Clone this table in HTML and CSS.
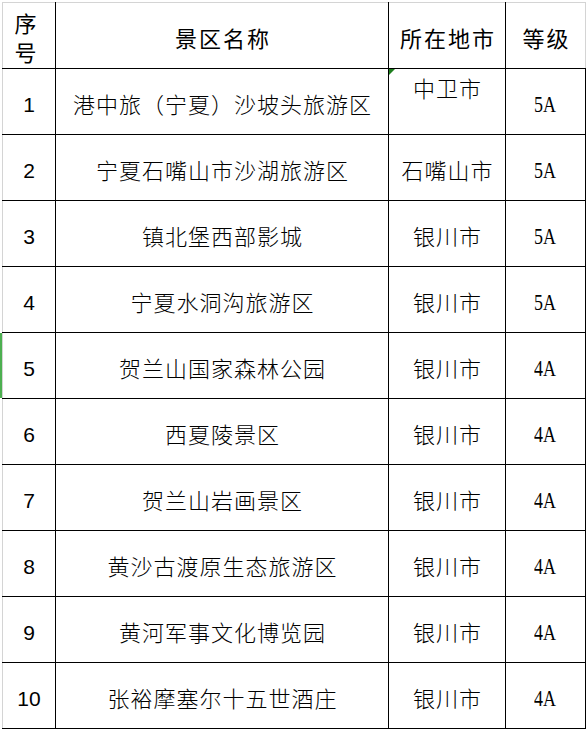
FILE: index.html
```html
<!DOCTYPE html>
<html lang="zh-CN">
<head>
<meta charset="utf-8">
<title>宁夏A级景区</title>
<link rel="stylesheet" href="styles.css">
</head>
<body>
<table class="sheet">
  <colgroup>
    <col class="c-no">
    <col class="c-name">
    <col class="c-city">
    <col class="c-grade">
  </colgroup>
  <thead>
    <tr>
      <th class="h-no">序<br>号</th>
      <th>景区名称</th>
      <th>所在地市</th>
      <th class="h-last">等级</th>
    </tr>
  </thead>
  <tbody>
    <tr><td class="no">1</td><td class="name">港中旅（宁夏）沙坡头旅游区</td><td class="city city-top flag">中卫市</td><td class="grade"><span class="g">5A</span></td></tr>
    <tr><td class="no">2</td><td class="name">宁夏石嘴山市沙湖旅游区</td><td class="city">石嘴山市</td><td class="grade"><span class="g">5A</span></td></tr>
    <tr><td class="no">3</td><td class="name">镇北堡西部影城</td><td class="city">银川市</td><td class="grade"><span class="g">5A</span></td></tr>
    <tr><td class="no">4</td><td class="name">宁夏水洞沟旅游区</td><td class="city">银川市</td><td class="grade"><span class="g">5A</span></td></tr>
    <tr><td class="no sel">5</td><td class="name">贺兰山国家森林公园</td><td class="city">银川市</td><td class="grade"><span class="g">4A</span></td></tr>
    <tr><td class="no">6</td><td class="name">西夏陵景区</td><td class="city">银川市</td><td class="grade"><span class="g">4A</span></td></tr>
    <tr><td class="no">7</td><td class="name">贺兰山岩画景区</td><td class="city">银川市</td><td class="grade"><span class="g">4A</span></td></tr>
    <tr><td class="no">8</td><td class="name">黄沙古渡原生态旅游区</td><td class="city">银川市</td><td class="grade"><span class="g">4A</span></td></tr>
    <tr><td class="no">9</td><td class="name">黄河军事文化博览园</td><td class="city">银川市</td><td class="grade"><span class="g">4A</span></td></tr>
    <tr><td class="no">10</td><td class="name">张裕摩塞尔十五世酒庄</td><td class="city">银川市</td><td class="grade"><span class="g">4A</span></td></tr>
  </tbody>
</table>
</body>
</html>
```
FILE: styles.css
```css
html, body {
  margin: 0;
  padding: 0;
  background: #ffffff;
}
body {
  padding: 2px 0 0 2px;
}
.sheet {
  border-collapse: collapse;
  table-layout: fixed;
  width: 583px;
  color: #000;
  font-family: "Noto Sans CJK SC", sans-serif;
}
.c-no { width: 53px; }
.c-name { width: 333px; }
.c-city { width: 117px; }
.c-grade { width: 80px; }

.sheet th,
.sheet td {
  box-sizing: border-box;
  height: 66px;
  padding: 6px 0 0 0;
  text-align: center;
  vertical-align: middle;
  border: 1px solid #000;
  white-space: nowrap;
  position: relative;
}
.sheet th {
  font-weight: 400;
  font-size: 22px;
  letter-spacing: 2px;
  text-indent: 2px;
  line-height: 30px;
  padding-top: 2px;
  border-top: 1px solid #d4d4d4;
}
.sheet th.h-no {
  line-height: 29px;
  padding-top: 3px;
  padding-right: 7px;
  letter-spacing: 0;
  text-indent: 0;
  border-left: 1px solid #d4d4d4;
}
.sheet th.h-last {
  border-right: 1px solid #d4d4d4;
}
.sheet td.no {
  font-family: "Liberation Sans", Arial, sans-serif;
  font-size: 21px;
  border-left: 1px solid #d4d4d4;
}
.sheet td.name,
.sheet td.city {
  font-size: 22px;
  font-weight: 300;
  letter-spacing: 1px;
  text-indent: 1px;
  line-height: 28px;
  padding-top: 3px;
}
.sheet td.city-top {
  vertical-align: top;
  padding-top: 4px;
}
.sheet td.grade {
  font-family: "Liberation Serif", "Times New Roman", serif;
  font-size: 23px;
}
.g {
  display: inline-block;
  transform: scaleX(0.78);
}
.flag::before {
  content: "";
  position: absolute;
  left: 0;
  top: 0;
  width: 0;
  height: 0;
  border-top: 6px solid #1e7e1e;
  border-right: 6px solid transparent;
}
.sel::before {
  content: "";
  position: absolute;
  left: -3px;
  top: 0;
  bottom: 0;
  width: 2px;
  background: #4caf50;
}
```
